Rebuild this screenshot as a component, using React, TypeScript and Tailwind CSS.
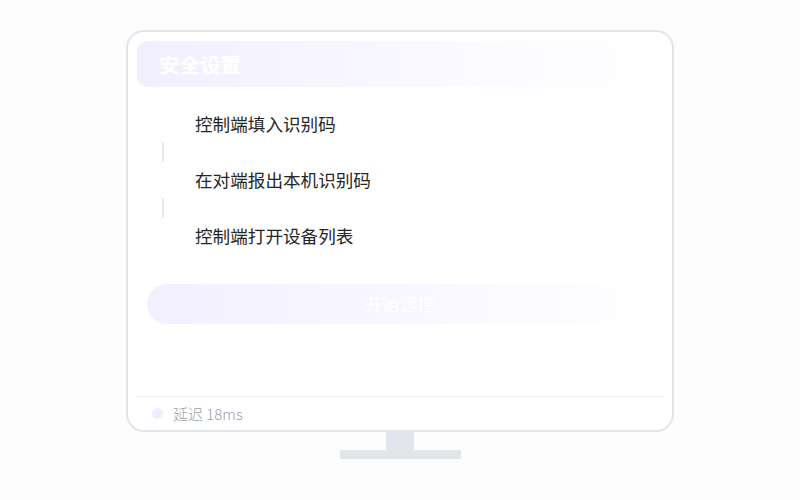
export default function App() {
  const steps = ['控制端填入识别码', '在对端报出本机识别码', '控制端打开设备列表'];

  return (
    <div
      className="w-[800px] h-[500px] bg-[#fdfdfd] flex flex-col items-center pt-[30px]"
      style={{ fontFamily: '"Noto Sans CJK SC", "Noto Sans", sans-serif' }}
    >
      {/* 显示器屏幕 */}
      <div className="w-[548px] h-[402px] bg-white border-2 border-[#e3e5ea] rounded-[18px] px-[9px] pt-[9px] flex flex-col">
        <div className="h-[46px] rounded-[10px] bg-gradient-to-r from-[#f2efff] via-[#f9f8ff] to-transparent flex items-center pl-[22px]">
          <span className="text-white text-[20.5px] font-bold leading-none">安全设置</span>
        </div>

        <div className="mt-[25px] pl-[25px] flex flex-col">
          {steps.map((s, i) => (
            <div key={s} className="flex flex-col">
              <div className="h-[24px] flex items-center pl-[33px] text-[17.6px] text-[#262626] leading-none">{s}</div>
              {i < steps.length - 1 && (
                <div className="my-[6px] w-[2px] h-[20px] bg-[#e8e9ee] rounded-full" />
              )}
            </div>
          ))}
        </div>

        <div className="mt-[36px] mx-[10px] h-[40px] rounded-full bg-gradient-to-r from-[#f3f0ff] via-[#f8f7ff] to-transparent flex items-center justify-center">
          <span className="text-white text-[17.5px] leading-none">开始远控</span>
        </div>

        <div className="mt-auto border-t border-[#eef0f3] h-[34px] flex items-center pl-[15px] gap-[10px]">
          <span className="w-[11px] h-[11px] rounded-full bg-[#f1eefc]" />
          <span className="text-[15px] font-light text-[#9a9ea8] leading-none">延迟 18ms</span>
        </div>
      </div>

      {/* 支架 */}
      <div className="w-[28px] h-[18px] bg-[#e2e5e9]" />
      <div className="w-[121px] h-[9px] bg-[#e2e5e9]" />
    </div>
  );
}
